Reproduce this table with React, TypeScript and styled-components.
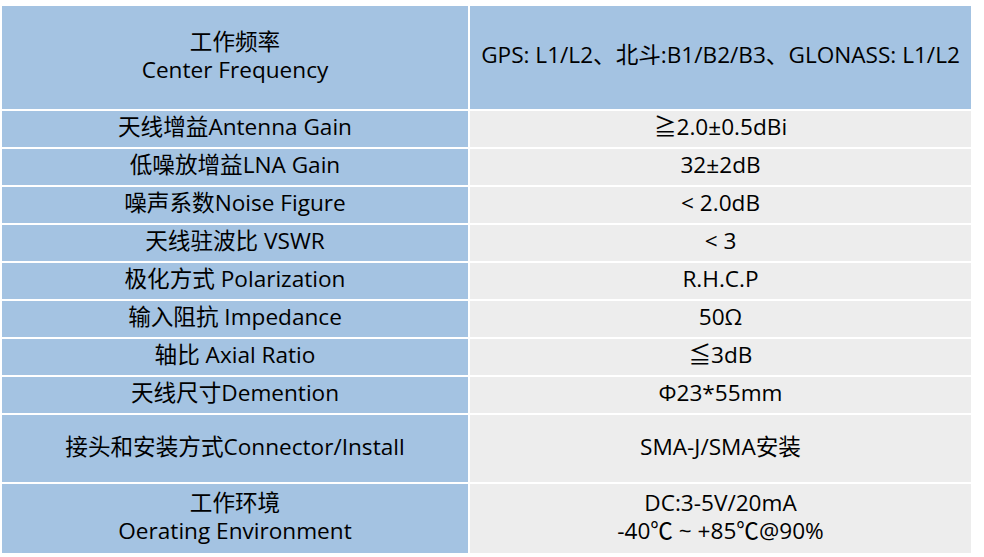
import React from 'react';
import styled, { createGlobalStyle } from 'styled-components';

const GlobalStyle = createGlobalStyle`
  html, body {
    margin: 0;
    padding: 0;
    background: #ffffff;
  }
  body {
    font-family: 'Open Sans', 'Noto Sans CJK SC', sans-serif;
    color: #000000;
  }
`;

const Page = styled.div`
  width: 984px;
  height: 557px;
  padding: 6px 0 0 2px;
  box-sizing: border-box;
`;

const SpecTable = styled.div`
  display: grid;
  grid-template-columns: 466px 501px;
  grid-template-rows: 103px repeat(8, 36px) 67px 69px;
  gap: 2px;
`;

const Cell = styled.div<{ $kind: 'label' | 'value' }>`
  display: flex;
  flex-direction: column;
  align-items: center;
  justify-content: center;
  text-align: center;
  font-size: 22.6px;
  line-height: 28px;
  white-space: nowrap;
  padding-bottom: 4px;
  box-sizing: border-box;
  background: ${(p) => (p.$kind === 'label' ? '#a4c3e2' : '#ededed')};
`;

const HeaderValue = styled(Cell)`
  background: #a4c3e2;
  padding-bottom: 6px;
`;

const rows: { label: React.ReactNode; value: React.ReactNode }[] = [
  { label: '天线增益Antenna Gain', value: '≧2.0±0.5dBi' },
  { label: '低噪放增益LNA Gain', value: '32±2dB' },
  { label: '噪声系数Noise Figure', value: '< 2.0dB' },
  { label: '天线驻波比 VSWR', value: '< 3' },
  { label: '极化方式 Polarization', value: 'R.H.C.P' },
  { label: '输入阻抗 Impedance', value: '50Ω' },
  { label: '轴比 Axial Ratio', value: '≦3dB' },
  { label: '天线尺寸Demention', value: 'Φ23*55mm' },
  { label: '接头和安装方式Connector/Install', value: 'SMA-J/SMA安装' },
  {
    label: (
      <>
        <span>工作环境</span>
        <span>Oerating Environment</span>
      </>
    ),
    value: (
      <>
        <span>DC:3-5V/20mA</span>
        <span>-40℃ ~ +85℃@90%</span>
      </>
    ),
  },
];

export default function App() {
  return (
    <Page>
      <GlobalStyle />
      <SpecTable>
        <Cell $kind="label">
          <span>工作频率</span>
          <span>Center Frequency</span>
        </Cell>
        <HeaderValue $kind="value">
          GPS: L1/L2、北斗:B1/B2/B3、GLONASS: L1/L2
        </HeaderValue>
        {rows.map((r, i) => (
          <React.Fragment key={i}>
            <Cell $kind="label">{r.label}</Cell>
            <Cell $kind="value">{r.value}</Cell>
          </React.Fragment>
        ))}
      </SpecTable>
    </Page>
  );
}
